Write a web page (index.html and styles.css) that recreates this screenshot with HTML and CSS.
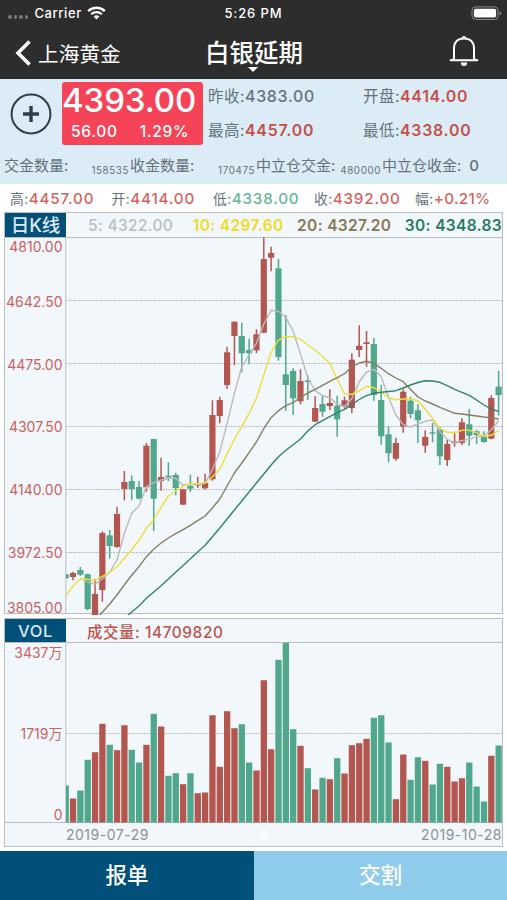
FILE: index.html
```
<!DOCTYPE html>
<html lang="zh">
<head>
  <meta charset="UTF-8">
  <title>白银延期</title>
  <meta name="viewport" content="width=device-width, initial-scale=1.0">
  <link rel="stylesheet" href="styles.css">
</head>
<body>

  <div class="status-bar">
    <div class="carrier">
      <span class="signal"><i></i><i></i><i></i><i></i></span>
      <span>Carrier</span>
      <svg class="wifi" width="19" height="14" viewBox="0 0 19 14">
        <path d="M1.2 5.1A12 12 0 0 1 17.8 5.1" fill="none" stroke="#fff" stroke-width="2.3"/>
        <path d="M4.2 8.2A7.6 7.6 0 0 1 14.8 8.2" fill="none" stroke="#fff" stroke-width="2.2"/>
        <path d="M9.5 13.5L6.6 10.5A4.3 4.3 0 0 1 12.4 10.5Z" fill="#fff"/>
      </svg>
    </div>
    <div class="clock">5:26 PM</div>
    <svg class="battery" width="31" height="15" viewBox="0 0 31 15">
      <rect x="1" y="0.9" width="26" height="12.6" rx="3.6" fill="none" stroke="#8b8b8b"/>
      <rect x="2.9" y="2.8" width="22.2" height="8.8" rx="1.8" fill="#fff"/>
      <path d="M28.6 5.2Q30.2 5.8 30.2 7.2T28.6 9.2Z" fill="#8b8b8b"/>
    </svg>
  </div>

  <div class="nav">
    <div class="back">
      <svg width="18" height="28" viewBox="0 0 18 28">
        <path d="M14.5 2.5L3 14L14.5 25.5" fill="none" stroke="#fff" stroke-width="3.6"/>
      </svg>
      <span>上海黄金</span>
    </div>
    <div class="title">白银延期</div>
    <svg class="bell" width="30" height="32" viewBox="0 0 30 32" fill="none" stroke="#fff" stroke-width="2">
      <path d="M5 24V13.5C5 7 9 3.5 15 3.5S25 7 25 13.5V24"/>
      <path d="M2 25.2Q5 25.2 5 22.5M28 25.2Q25 25.2 25 22.5M1.6 25.2H28.4" stroke-linecap="round"/>
      <path d="M11.8 27.5H18.2Q18.2 31 15 31T11.8 27.5Z" fill="#fff" stroke="none"/>
      <path d="M12.6 3.4Q12.8 1 15 1T17.4 3.4Z" fill="#fff" stroke="none"/>
    </svg>
  </div>

  <div class="quote">
    <div class="quote-top">
      <svg class="add" width="42" height="42" viewBox="0 0 42 42" fill="none" stroke="#2c3e48">
        <circle cx="21" cy="21" r="19.4" stroke-width="2"/>
        <path d="M21 13V29M13 21H29" stroke-width="3.4"/>
      </svg>
      <div class="price-box">
        <div class="price">4393.00</div>
        <div class="change"><span>56.00</span><span>1.29%</span></div>
      </div>
      <div class="quote-grid">
        <div>昨收:<b class="grey">4383.00</b></div>
        <div>开盘:<b>4414.00</b></div>
        <div>最高:<b>4457.00</b></div>
        <div>最低:<b>4338.00</b></div>
      </div>
    </div>
    <div class="amounts">
      <div>交金数量:<small>158535</small></div>
      <div>收金数量:<small>170475</small></div>
      <div>中立仓交金:<small>480000</small></div>
      <div>中立仓收金:<em>0</em></div>
    </div>
  </div>

  <div class="ohlc">
    <div>高:<b>4457.00</b></div>
    <div>开:<b>4414.00</b></div>
    <div>低:<b class="down">4338.00</b></div>
    <div>收:<b>4392.00</b></div>
    <div>幅:<b class="range">+0.21%</b></div>
  </div>

  <div class="panel">
    <div class="panel-head">
      <div class="tab tab-k">日K线</div>
      <div class="ma">
        <span class="ma5">5: 4322.00</span>
        <span class="ma10">10: 4297.60</span>
        <span class="ma20">20: 4327.20</span>
        <span class="ma30">30: 4348.83</span>
      </div>
    </div>
    <svg id="kline" class="chart" width="497" height="376" viewBox="5 237 497 376"></svg>
  </div>

  <div class="panel panel-vol">
    <div class="panel-head">
      <div class="tab">VOL</div>
      <div class="vol-total">成交量: 14709820</div>
    </div>
    <svg id="volume" class="chart" width="497" height="181" viewBox="5 642 497 181"></svg>
    <div class="dates">
      <span>2019-07-29</span>
      <i class="dot"></i>
      <span>2019-10-28</span>
    </div>
  </div>

  <div class="footer">
    <div class="order">报单</div>
    <div class="delivery">交割</div>
  </div>

  <script src="chart.js"></script>
</body>
</html>
```
FILE: styles.css
```
* {
  box-sizing: border-box;
}

body {
  margin: 0;
  height: 900px;
  overflow: hidden;
  background: #fff;
  font-family: Inter, "Noto Sans CJK SC", sans-serif;
  color: #65717a;
  display: flex;
  flex-direction: column;
}

b {
  font-weight: 600;
  color: #c4504a;
}

.status-bar {
  height: 26px;
  flex: none;
  background: #2d2d2d;
  color: #fff;
  display: grid;
  grid-template-columns: 1fr auto 1fr;
  align-items: center;
  padding: 0 5px 0 8px;
  font-size: 13px;
  font-weight: 500;
}

.carrier {
  display: flex;
  align-items: center;
  letter-spacing: 0.6px;
}

.signal {
  display: flex;
  gap: 2px;
  margin: 8px 6px 0 0;
}

.signal i {
  width: 3.6px;
  height: 3.6px;
  border-radius: 50%;
  background: #777;
}

.wifi {
  margin-left: 5px;
}

.clock {
  letter-spacing: 0.9px;
  margin-right: 3px;
}

.battery {
  justify-self: end;
}

.nav {
  height: 53px;
  flex: none;
  background: #2d2d2d;
  color: #fff;
  display: grid;
  grid-template-columns: 190px 98px 1fr;
  align-items: center;
  padding: 0 28px 0 15px;
}

.back {
  display: flex;
  align-items: center;
  gap: 5px;
  font-size: 20.7px;
  font-weight: 400;
}

.title {
  position: relative;
  font-size: 24.5px;
  font-weight: 500;
  line-height: 52px;
}

.title::after {
  content: "";
  position: absolute;
  left: 43px;
  bottom: 7px;
  border: 5px solid transparent;
  border-top-color: #fff;
  border-bottom: 0;
}

.bell {
  justify-self: end;
  margin-bottom: 3px;
}

.quote {
  height: 105px;
  flex: none;
  background: #dbecf7;
}

.quote-top {
  display: flex;
  height: 69px;
  padding: 3px 0 3px 10px;
}

.add {
  margin-top: 11px;
}

.price-box {
  width: 141px;
  height: 63px;
  margin-left: 10px;
  background: #f54457;
  border-radius: 3px;
  color: #fff;
}

.price {
  font-size: 33px;
  font-weight: 500;
  line-height: 37px;
  letter-spacing: -0.1px;
}

.change {
  display: flex;
  justify-content: space-between;
  padding: 0 14px 0 9px;
  font-size: 15.5px;
  font-weight: 500;
  line-height: 26px;
  letter-spacing: 0.7px;
}

.quote-grid {
  flex: 1;
  display: grid;
  grid-template-columns: 155px 1fr;
  grid-template-rows: 30px 37px;
  align-items: center;
  margin-left: 5px;
  font-size: 15.5px;
  line-height: 20px;
  letter-spacing: 0.5px;
}

.quote-grid b {
  font-size: 15.9px;
  letter-spacing: 0.75px;
}

.quote-grid .grey {
  color: #65717a;
  font-weight: 500;
}

.amounts {
  display: grid;
  grid-template-columns: 126px 126px 126px 1fr;
  padding-left: 4px;
  height: 36px;
  font-size: 15px;
  line-height: 36px;
}

.amounts div {
  display: flex;
  justify-content: space-between;
  padding-right: 1px;
}

.amounts small {
  font-size: 9.8px;
  letter-spacing: 0.6px;
  line-height: 46px;
}

.amounts em {
  font-style: normal;
  font-weight: 500;
  margin-right: 27px;
}

.ohlc {
  height: 28px;
  flex: none;
  display: grid;
  grid-template-columns: 101.5px 101.5px 101px 101px 1fr;
  padding-left: 10px;
  font-size: 13.8px;
  line-height: 29px;
  letter-spacing: 0.5px;
}

.ohlc b {
  font-weight: 500;
  font-size: 15.2px;
  letter-spacing: 0.8px;
  color: #d2645f;
}

.ohlc .down {
  color: #66b799;
}

.ohlc .range {
  letter-spacing: 0.3px;
}

.panel {
  width: 499px;
  flex: none;
  margin-left: 4px;
  border: 1px solid #b9bdc0;
  background: #f2f7fb;
}

.panel-head {
  height: 24px;
  display: flex;
  align-items: center;
}

.panel-vol {
  margin-top: 4px;
}

.panel-vol .panel-head {
  height: 23px;
}

.tab {
  width: 61px;
  height: 100%;
  background: #00507a;
  color: #dce8f0;
  text-align: center;
  font-size: 16.5px;
  font-weight: 500;
  line-height: 24px;
  letter-spacing: 0.6px;
}

.tab-k {
  font-size: 18.5px;
  letter-spacing: 0;
}

.ma {
  flex: 1;
  display: flex;
  gap: 13.5px;
  padding-left: 22px;
  font-size: 15.5px;
  font-weight: 600;
  letter-spacing: 0.35px;
}

.ma5 {
  margin-right: auto;
  color: #bcbcc0;
  font-weight: 500;
}

.ma10 {
  color: #eedb28;
}

.ma20 {
  color: #857752;
}

.ma30 {
  color: #287a5c;
}

.vol-total {
  margin-left: 21px;
  font-size: 15.4px;
  font-weight: 500;
  letter-spacing: 0.6px;
  color: #bd534d;
}

.chart {
  display: block;
  overflow: visible;
}

.chart text {
  font-size: 14px;
  fill: #c9635f;
  text-anchor: end;
}

.dates {
  height: 23px;
  display: flex;
  justify-content: space-between;
  align-items: center;
  padding-left: 61px;
  font-size: 14px;
  line-height: 23px;
  letter-spacing: 0.5px;
  color: #8c9194;
}

.dot {
  width: 8px;
  height: 8px;
  border-radius: 50%;
  background: #fff;
  margin-right: 42px;
}

.footer {
  height: 49px;
  margin-top: auto;
  display: flex;
  color: #fff;
  font-size: 21.5px;
  font-weight: 500;
  line-height: 48px;
  text-align: center;
}

.order {
  width: 254px;
  background: #00507a;
}

.delivery {
  flex: 1;
  background: #8fcbeb;
}
```
FILE: chart.js
```
const RED = '#b3564f';
const GREEN = '#50a78c';
const LEFT = 66;
const RIGHT = 502;
const STEP = 7.338;

const barX = i => 65.66 + i * STEP;

// direction, high, body top, body bottom, low
const candles = [
  ['g', 574, 574.3, 578.3, 579], ['r', 572, 573, 577, 580.3], ['g', 567, 570, 574.7, 576],
  ['g', 573.5, 574.3, 609, 610.3], ['r', 579, 594, 615, 615], ['r', 531.3, 533, 590, 601.7],
  ['g', 530, 535.3, 546, 558.7], ['r', 506.7, 514, 547, 547.7], ['r', 471, 482, 489, 500.3],
  ['g', 475.3, 481, 489, 500.3], ['g', 481, 487, 498.7, 499.3], ['r', 443, 445.7, 487.3, 491.7],
  ['g', 439, 439, 498.7, 531], ['r', 457.7, 477, 481, 490.7], ['g', 462.3, 475.7, 477.3, 481],
  ['g', 472.7, 475, 488, 495.3], ['r', 489.3, 489.3, 504.7, 504.7], ['g', 474.7, 486, 488.7, 492],
  ['r', 476.7, 484, 485.5, 488], ['r', 473.7, 483, 488.3, 489.3], ['r', 400.3, 415, 479.3, 480.7],
  ['r', 396.7, 400, 416, 423.3], ['r', 346.7, 352.3, 385, 389], ['r', 321.7, 321.7, 336, 365],
  ['g', 322.7, 336, 353.3, 372.3], ['g', 338.7, 350, 353.3, 364.3], ['r', 329.3, 334.3, 350.3, 353],
  ['r', 237.5, 259, 332.7, 333.3], ['r', 246.7, 253, 257.7, 271.3], ['g', 259, 268.3, 357, 360.7],
  ['g', 315, 374.3, 385, 410.7], ['g', 368.3, 371, 398.3, 415], ['r', 369.3, 381, 401.3, 404.3],
  ['g', 375.3, 380.5, 382, 400], ['r', 396, 408, 421.7, 422], ['g', 395.3, 404, 411.7, 416.7],
  ['r', 389.3, 403, 406, 410], ['g', 395.7, 405.7, 419.3, 436.7], ['r', 396.7, 400.3, 406.7, 408.7],
  ['r', 353.3, 359.7, 408, 413.3], ['r', 325.3, 345.7, 350, 357], ['r', 331, 342.3, 344, 366.7],
  ['g', 338, 344, 395, 400.7], ['g', 384.7, 400, 436.3, 444.7], ['g', 426.7, 434.3, 453.3, 462.3],
  ['r', 437.7, 443, 458.7, 460.7], ['r', 389.3, 391.7, 426.7, 432.7], ['g', 396.7, 400.7, 414, 418.3],
  ['g', 404.3, 410.3, 420.3, 443], ['r', 430.3, 437, 445.7, 452.7], ['g', 423, 432.3, 433.7, 442.3],
  ['g', 426.7, 429, 456.3, 465], ['r', 439.7, 444, 460, 466], ['r', 431.7, 441.3, 443.3, 446.7],
  ['r', 418.3, 422.3, 443, 445], ['g', 409, 424.3, 435.7, 445.7], ['g', 430, 431.3, 435, 444],
  ['g', 431.3, 436.3, 442, 442.7], ['r', 395.3, 398, 438.7, 439.3], ['g', 370.7, 386.7, 395, 415.7]
];

// moving averages, start = first bar
const averages = [
  { color: '#bbb9bd', start: 2, y: [578, 582, 584.3, 578.7, 572.3, 560, 533.3, 513.3, 506, 486.7, 482.7, 480, 478.3, 478.3, 485.3, 484.3, 484.3, 483.3, 469.5, 451.7, 423.3, 393.3, 366.7, 355, 343.3, 324, 310.3, 311.3, 317.3, 331, 354, 378.3, 390.7, 395.7, 397.7, 404, 406.7, 398.5, 382, 372, 369.3, 376.7, 397.3, 415, 424.7, 427, 424, 421.3, 420, 431.7, 439.3, 442.7, 440.7, 439.3, 436.7, 435.7, 430, 420.7] },
  { color: '#eadf3c', start: 0, y: [596, 586, 579, 579.3, 580.7, 576.3, 572.3, 567, 558.3, 549.7, 540.3, 528.3, 520, 507.3, 496, 491, 486.3, 483.7, 483.7, 482.7, 476.7, 469.3, 454, 439.3, 426.7, 413.3, 398.3, 375, 352.3, 340, 336.7, 336.7, 339.3, 345, 350.3, 356.3, 363.3, 379.3, 393.8, 394.3, 391, 386, 387.7, 392, 397.7, 399.7, 399, 398.7, 400.7, 409.3, 418.3, 428.7, 432.3, 433, 430.3, 430.3, 432.7, 436.3, 435.3, 430.3] },
  { color: '#887e60', start: 4, y: [621, 612.3, 604, 595, 584.7, 575.3, 566.7, 556.7, 549.3, 543, 538, 533.7, 529.7, 525.3, 520.7, 516, 508, 499, 486, 473, 463, 452.7, 442, 428.7, 417.7, 410.7, 405.7, 402.7, 397.3, 393, 389.3, 385.3, 381.3, 377.7, 373.7, 367, 363, 361.3, 363.3, 368.3, 373.7, 378, 381.7, 389.3, 397, 401, 404, 407.3, 410.3, 413.3, 414, 415, 416, 417, 417.7, 419] },
  { color: '#31836a', start: 8, y: [618.5, 612, 606, 598.3, 592, 585.7, 579, 572.3, 565.5, 558.7, 552, 545.3, 536.7, 528, 519, 510, 501, 492, 483, 474, 465, 456.7, 450.3, 444.7, 439, 431, 424.7, 420.7, 416.7, 412.7, 409.3, 404.5, 399.5, 395.7, 393.3, 392.3, 391.5, 390.7, 388, 385, 382.5, 380.7, 381, 382.3, 385.7, 389.3, 392.3, 395.3, 400, 405, 409, 411.3] }
];

// bar heights
const volumes = [37, 24, 32, 62.7, 70.3, 98.7, 77.7, 72.3, 97.3, 72.7, 60, 77.7, 108.7, 96, 46.7, 49.3, 38.3, 49.3, 29.3, 30, 107.3, 55.7, 111.3, 94.3, 98.3, 60, 52, 142.3, 73.3, 162.7, 179.7, 93.3, 76.7, 54.3, 33, 44.7, 43.3, 64.3, 49, 77.3, 79.3, 83.7, 104.7, 107.3, 80, 23.3, 68, 42.7, 65.3, 61.7, 38, 58.7, 55.7, 41, 44.3, 60, 36, 21, 66.7, 77];
const volumeColors = 'grggrrgrrggrgrggrgrrrrrrggrrrgggrgrgrgrrrrgggrrggrggrrrgggrg';

function gridLine(y) {
  return `<path d="M${LEFT} ${y}H${RIGHT}" stroke="#b4b7ba" stroke-dasharray="1.5 1"/>`;
}

function axisLabel(y, text) {
  return `<text x="62.5" y="${y}">${text}</text>`;
}

function drawKline() {
  let out = '<clipPath id="plot"><rect x="66" y="237" width="436" height="378"/></clipPath>';
  out += [300.5, 363.5, 426.5, 489.5, 552.5].map(gridLine).join('');
  out += `<path d="M5 237.5H${RIGHT}M65.8 237V613" stroke="#b9bdc0"/>`;

  const labels = [[252, '4810.00'], [307, '4642.50'], [370, '4475.00'], [432, '4307.50'], [495, '4140.00'], [558, '3972.50'], [612.5, '3805.00']];
  out += labels.map(l => axisLabel(l[0], l[1])).join('');

  out += '<g clip-path="url(#plot)">';
  candles.forEach(([dir, high, top, bottom, low], i) => {
    const x = barX(i);
    const color = dir === 'r' ? RED : GREEN;
    out += `<path d="M${x} ${high}V${low}" stroke="${color}" stroke-width="1.5"/>`;
    out += `<rect x="${x - 3.1}" y="${top}" width="6.2" height="${bottom - top}" fill="${color}"/>`;
  });
  averages.forEach(line => {
    const points = line.y.map((y, i) => `${barX(line.start + i).toFixed(1)},${y}`).join(' ');
    out += `<polyline points="${points}" fill="none" stroke="${line.color}" stroke-width="1.4" stroke-linejoin="round"/>`;
  });
  out += '</g>';
  document.getElementById('kline').innerHTML = out;
}

function drawVolume() {
  const base = 822.5;
  let out = '<clipPath id="volPlot"><rect x="66" y="642" width="436" height="181"/></clipPath>';
  out += gridLine(733.5);
  out += `<path d="M5 642.5H${RIGHT}M65.8 642V823M5 ${base}H${RIGHT}" stroke="#b9bdc0"/>`;
  out += axisLabel(658, '3437万') + axisLabel(739, '1719万') + axisLabel(820, '0');

  out += '<g clip-path="url(#volPlot)">';
  volumes.forEach((h, i) => {
    const color = volumeColors[i] === 'r' ? RED : GREEN;
    out += `<rect x="${barX(i) - 3.1}" y="${base - h}" width="6.3" height="${h}" fill="${color}"/>`;
  });
  out += '</g>';
  document.getElementById('volume').innerHTML = out;
}

drawKline();
drawVolume();
```
